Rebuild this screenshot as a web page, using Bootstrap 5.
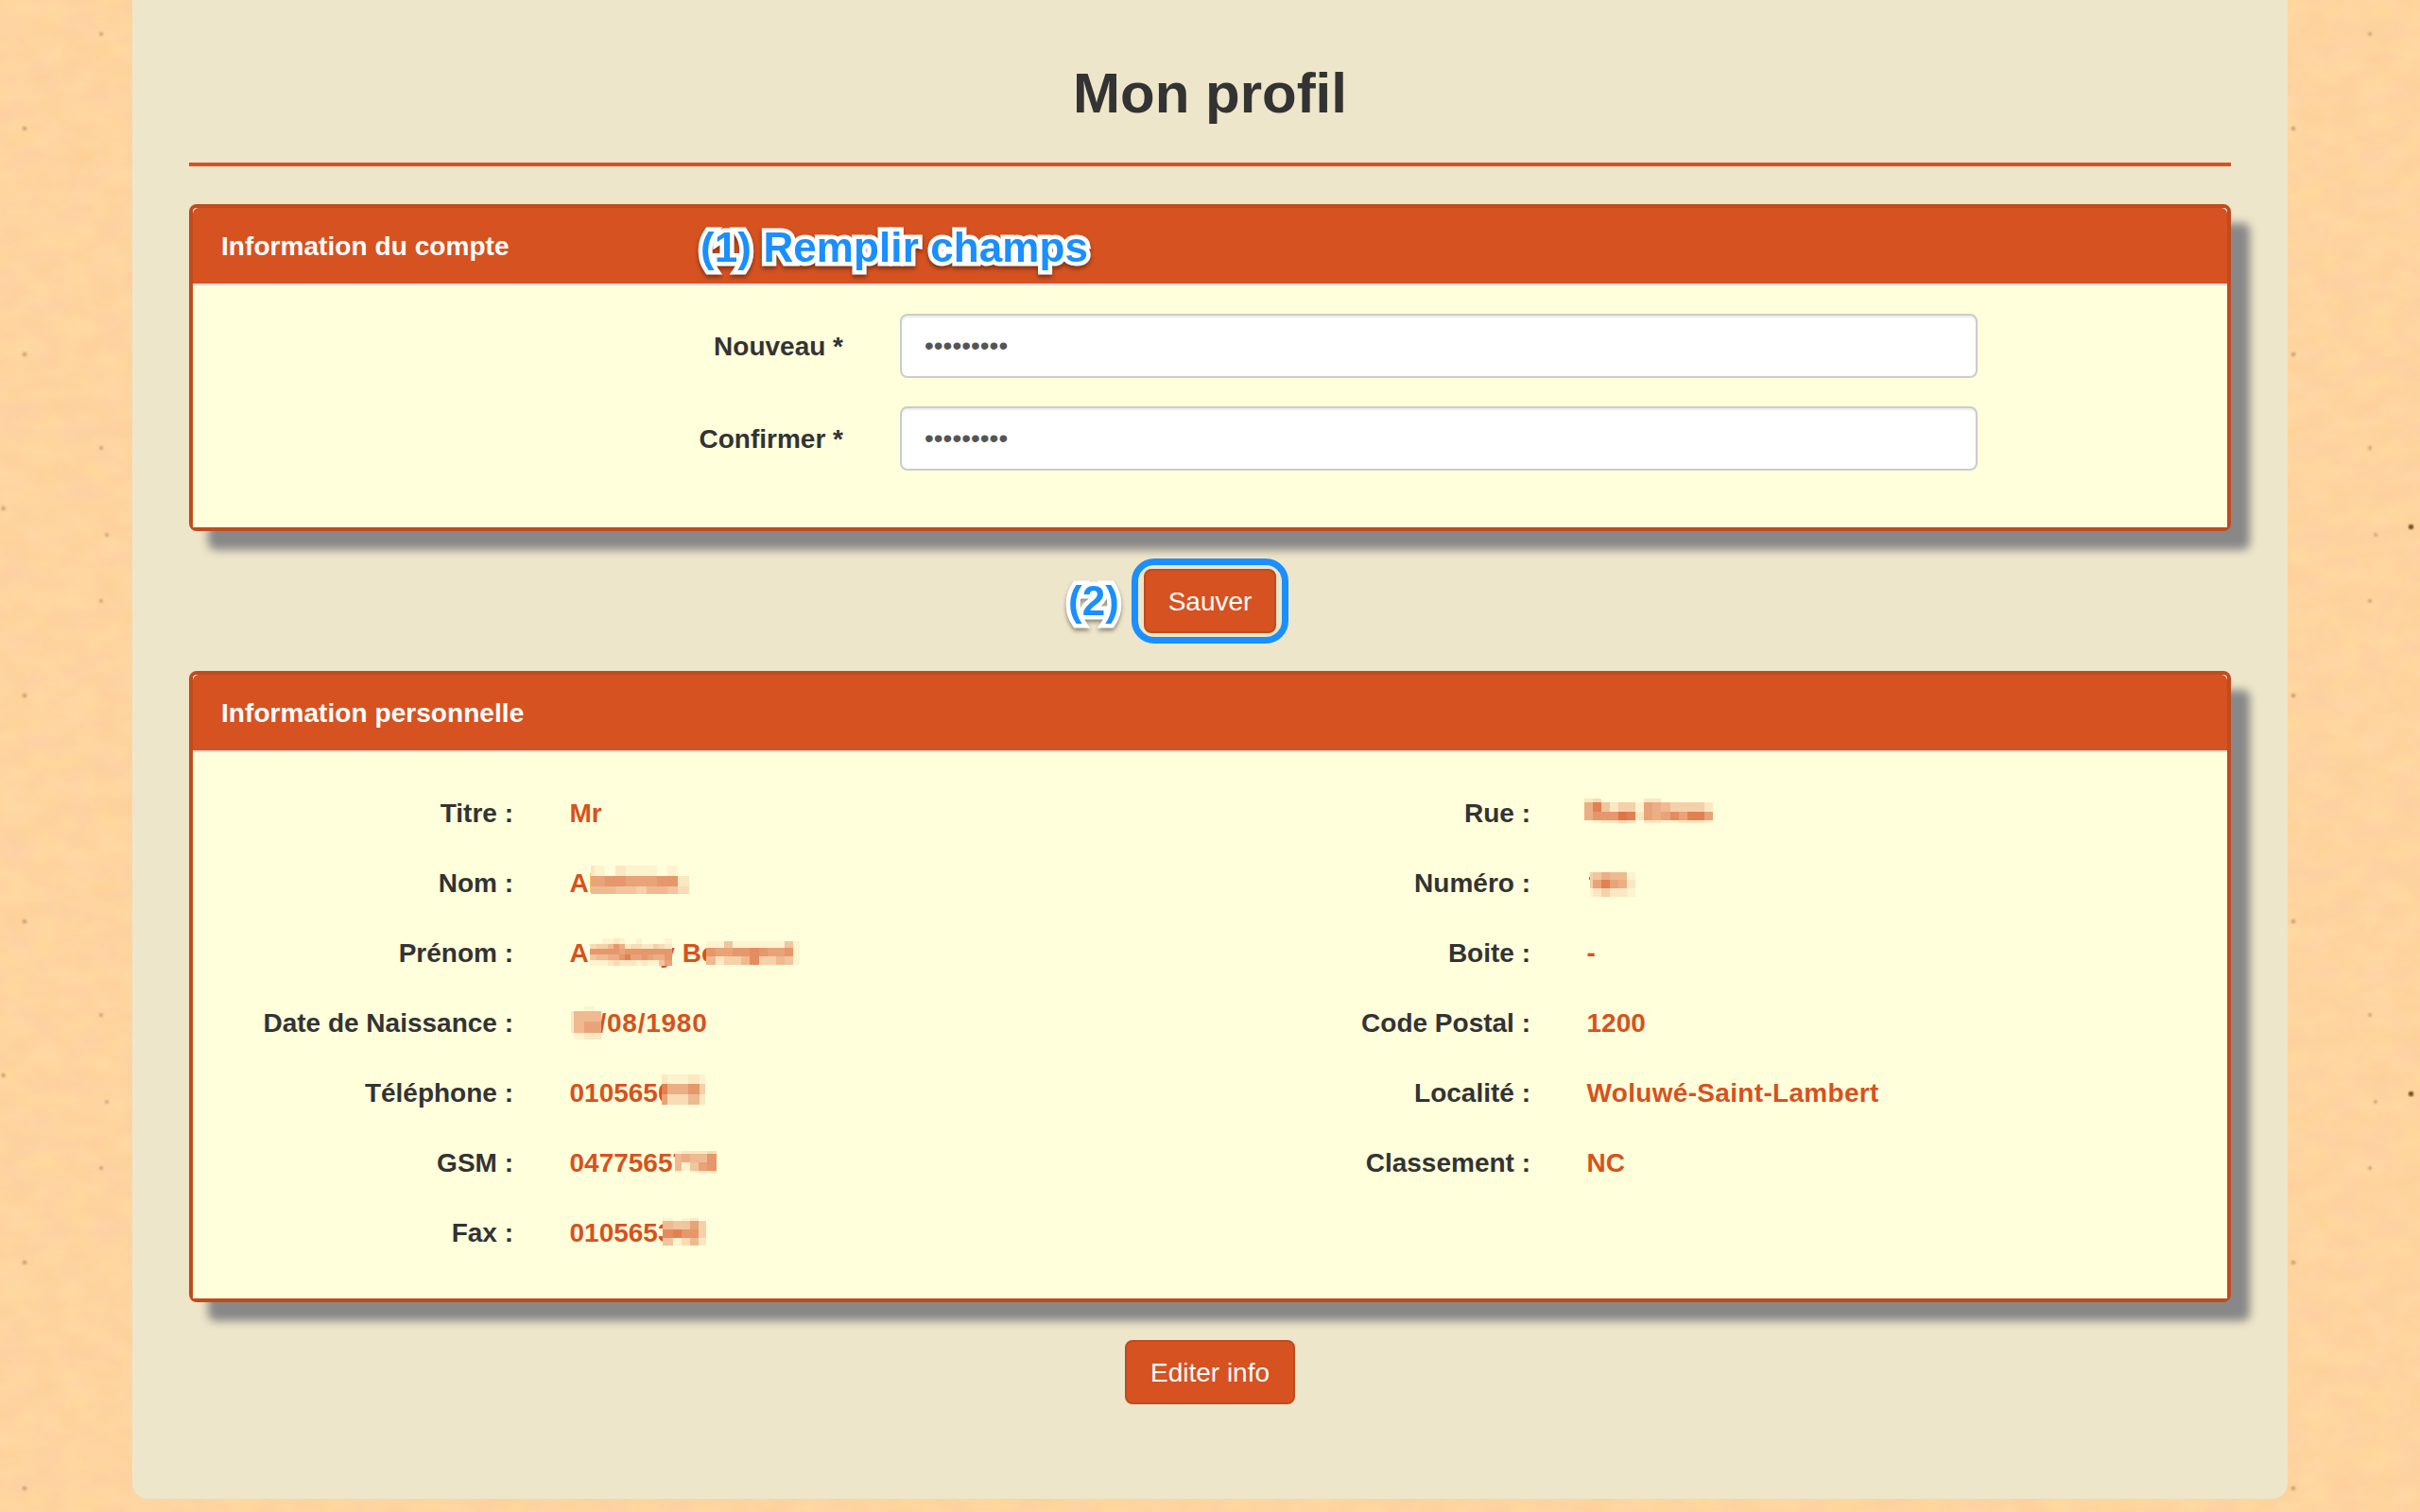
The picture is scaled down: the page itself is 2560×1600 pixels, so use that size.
<!DOCTYPE html>
<html lang="fr">
<head>
<meta charset="utf-8">
<title>Mon profil</title>
<link href="https://cdn.jsdelivr.net/npm/bootstrap@5.3.0/dist/css/bootstrap.min.css" rel="stylesheet">
<style>
body{font-family:"Liberation Sans",Arial,sans-serif;font-size:28px;line-height:40px;color:#333;background:#ffd5a0;height:1600px;overflow:hidden}
.paper{position:fixed;inset:0;width:2560px;height:1600px;z-index:-1}
.sheet{width:2280px;height:1586px;background:#eee6ca;border-radius:0 0 16px 16px;padding:66px 60px 0}
.page-title{font-size:60px;line-height:66px;font-weight:700;margin:0 0 40px}
.rule{height:4px;background:#d65221;margin-bottom:40px}
.card.panel{border:4px solid #c04b1f;border-radius:8px;background:#fff;box-shadow:20px 20px 10px #888;margin-bottom:40px}
.panel .card-header{background:#d65221;color:#fff;font-weight:700;height:82px;padding:21px 30px 19px;border-bottom:2px solid #ddd;border-radius:6px 6px 0 0;letter-spacing:.06px}
.panel .card-body{background:#ffffdb}
.account{padding:30px 0 60px}
.account .field-row+.field-row{margin-top:30px}
.account .field-label{width:718px;padding:2px 30px 0 0}
.account .form-control{width:1140px;height:68px;margin-left:30px;padding:12px 24px;font-size:28px;color:#555;border:2px solid #ccc;border-radius:8px;box-shadow:inset 0 2px 2px rgba(0,0,0,.075);background:#fff}
.personal{padding:27px 0 33px}
.info-line{height:74px}
.info-line dt{width:368px;padding:2px 29px 0 0}
.info-line dd{padding:2px 0 0 30.5px;margin:0;color:#d65221}
.cover{position:relative;display:block;white-space:pre}
.cover svg{position:absolute;left:-.5px;top:-18px;width:1px;height:1px;overflow:visible}
.btn.btn-brand{--bs-btn-color:#fff;--bs-btn-bg:#d65221;--bs-btn-border-color:#c04b1f;--bs-btn-hover-color:#fff;--bs-btn-hover-bg:#c04b1f;height:68px;padding:13px 0 11px;font-size:28px;line-height:40px;border-width:2px;border-radius:8px}
.w-save{width:140px}.w-edit{width:180px}
.actions{margin-bottom:40px}
.note{position:absolute;font-size:44px;line-height:44px;font-weight:700;letter-spacing:.1px;color:#1a8fff;white-space:nowrap;-webkit-text-stroke:9px #fff;paint-order:stroke fill;stroke-linejoin:round;filter:drop-shadow(0 3px 2px rgba(0,0,0,.4))}
.note-fill{left:537px;top:20px}
.note-save{left:-80px;top:12px}
.halo{position:absolute;left:-13px;top:-11px;width:166px;height:90px;border:7px solid #1a8fff;border-radius:24px}
.off-y{margin-left:58.5px}.off-date{margin-left:31px;letter-spacing:.75px}
.ls-town{letter-spacing:.32px}
</style>
</head>
<body>
<svg class="paper" aria-hidden="true">
  <defs>
    <filter id="grain" x="0" y="0" width="100%" height="100%" color-interpolation-filters="sRGB">
      <feTurbulence type="fractalNoise" baseFrequency=".03 .045" numOctaves="4" seed="8"/>
      <feColorMatrix values="0 0 0 0 .997  .05 0 0 0 .807  0 .07 0 0 .59  0 0 0 0 1"/>
    </filter>
    <filter id="soft"><feGaussianBlur stdDeviation=".8"/></filter>
    <pattern id="specks" width="600" height="600" patternUnits="userSpaceOnUse">
      <g fill="#9a6a45" opacity=".5" filter="url(#soft)">
        <circle cx="107" cy="36" r="2"/><circle cx="26" cy="136" r="2.3"/><circle cx="26" cy="375" r="2.3"/><circle cx="107" cy="474" r="2"/><circle cx="3.5" cy="538" r="2.2"/><circle cx="113" cy="566" r="1.9"/>
      </g>
      <circle cx="150.5" cy="557.5" r="2.6" fill="#6b3a12" filter="url(#soft)"/>
    </pattern>
  </defs>
  <rect width="2560" height="1600" filter="url(#grain)"/>
  <rect width="2560" height="1600" fill="url(#specks)"/>
</svg>
<main class="sheet mx-auto">
  <h1 class="page-title text-center">Mon profil</h1>
  <div class="rule"></div>

  <section class="card panel">
    <div class="card-header position-relative">Information du compte<span class="note note-fill">(1) Remplir champs</span></div>
    <form class="card-body account" id="account">
      <div class="field-row d-flex align-items-center">
        <label class="field-label text-end fw-bold" for="pw1">Nouveau *</label>
        <input class="form-control" type="password" id="pw1" value="123456789">
      </div>
      <div class="field-row d-flex align-items-center">
        <label class="field-label text-end fw-bold" for="pw2">Confirmer *</label>
        <input class="form-control" type="password" id="pw2" value="123456789">
      </div>
    </form>
  </section>

  <div class="actions d-flex justify-content-center">
    <div class="position-relative">
      <span class="note note-save">(2)</span>
      <button class="btn btn-brand w-save d-block" type="button">Sauver</button>
      <span class="halo"></span>
    </div>
  </div>

  <section class="card panel">
    <div class="card-header">Information personnelle</div>
    <div class="card-body personal">
      <div class="row g-0 fw-bold">
        <dl class="col-6 mb-0">
          <div class="info-line d-flex align-items-center"><dt class="text-end">Titre :</dt><dd>Mr</dd></div>
          <div class="info-line d-flex align-items-center"><dt class="text-end">Nom :</dt><dd><span class="cover">Al<svg data-x="23 27 38 49 60 71 82 93 104 115 127" data-y="19 30 41 49" data-a="2102111010 8899888992 6665546653"></svg></span></dd></div>
          <div class="info-line d-flex align-items-center"><dt class="text-end">Prénom :</dt><dd><span class="cover">An<span class="off-y">y</span> Be<svg data-x="22 29 35 41 47 53 59 65 71 77 83 89 95 101 109" data-y="22 28 33 39 45 51" data-a="00112100100001 34469723322432 99999899999999 566779b8898779d 11123222121158"></svg><svg data-x="145 155 164 173 182 191 201 210 219 228 237 244" data-y="25 32 41 50" data-a="11511111151 98899a98891 62446a44651"></svg></span></dd></div>
          <div class="info-line d-flex align-items-center"><dt class="text-end">Date de Naissance :</dt><dd><span class="cover"><span class="off-date">/08/1980</span><svg data-x="2 5 16 27 34" data-y="20 25 36 48 55" data-a="0010 2666 2688 0122"></svg></span></dd></div>
          <div class="info-line d-flex align-items-center"><dt class="text-end">Téléphone :</dt><dd><span class="cover">0105650<svg data-x="98 104 115 126 138 144" data-y="18 28 39 50" data-a="21121 b7794 83362"></svg></span></dd></div>
          <div class="info-line d-flex align-items-center"><dt class="text-end">GSM :</dt><dd><span class="cover">04775657<svg data-x="112 119 128 137 146 156" data-y="25 28 37 46 48" data-a="12223 67669 61589 10122"></svg></span></dd></div>
          <div class="info-line d-flex align-items-center"><dt class="text-end">Fax :</dt><dd><span class="cover">0105653<svg data-x="99 110 119 128 137 145" data-y="22 25 34 43 51" data-a="10120 65584 ab994 51362"></svg></span></dd></div>
        </dl>
        <dl class="col-6 mb-0">
          <div class="info-line d-flex align-items-center"><dt class="text-end">Rue :</dt><dd><span class="cover">&nbsp;<svg data-x="-2 7 16 25 34 43 52 61 70 79 89 98 107 116 125 134" data-y="22 26 36 45 48" data-a="230000022000000 7b5244187644442 799 " data-skip></svg></span></dd></div>
          <div class="info-line d-flex align-items-center"><dt class="text-end">Numéro :</dt><dd><span class="cover">&nbsp;<svg data-x="4 7 16 25 34 43 52" data-y="26 34 43 52" data-a="457661 48b872 124221"><rect x="3" y="31" width="1.4" height="3" fill="#d65221"/></svg></span></dd></div>
          <div class="info-line d-flex align-items-center"><dt class="text-end">Boite :</dt><dd>-</dd></div>
          <div class="info-line d-flex align-items-center"><dt class="text-end">Code Postal :</dt><dd>1200</dd></div>
          <div class="info-line d-flex align-items-center"><dt class="text-end">Localité :</dt><dd class="ls-town">Woluwé-Saint-Lambert</dd></div>
          <div class="info-line d-flex align-items-center"><dt class="text-end">Classement :</dt><dd>NC</dd></div>
        </dl>
      </div>
    </div>
  </section>

  <div class="d-flex justify-content-center">
    <button class="btn btn-brand w-edit" type="button">Editer info</button>
  </div>
</main>
<script src="https://cdn.jsdelivr.net/npm/bootstrap@5.3.0/dist/js/bootstrap.bundle.min.js"></script>
<script>
// Builds the pixelated masks: column edges, row edges, one hex strength per cell.
document.querySelector('.cover svg[data-skip]').dataset.a = '230000022000000 7b5244187644442 7999cb2878a8bb8 012232022112221';
document.querySelectorAll('.cover svg').forEach(function (svg) {
  var xs = svg.dataset.x.split(' ').map(Number), ys = svg.dataset.y.split(' ').map(Number), rows = svg.dataset.a.split(' ');
  function cell(x, y, w, h, fill) {
    var r = document.createElementNS('http://www.w3.org/2000/svg', 'rect');
    r.setAttribute('x', x); r.setAttribute('y', y); r.setAttribute('width', w); r.setAttribute('height', h);
    r.setAttribute('fill', fill); r.setAttribute('shape-rendering', 'crispEdges');
    svg.appendChild(r);
  }
  rows.forEach(function (row, j) {
    for (var i = 0; i < xs.length - 1; i++) {
      var a = parseInt(row[i] || '1', 16) / 15;
      var c = [[255, 214], [255, 82], [219, 33]].map(function (p) { return Math.round(p[0] + (p[1] - p[0]) * a); });
      cell(xs[i], ys[j], xs[i + 1] - xs[i], ys[j + 1] - ys[j], 'rgb(' + c + ')');
    }
  });
});
</script>
</body>
</html>
